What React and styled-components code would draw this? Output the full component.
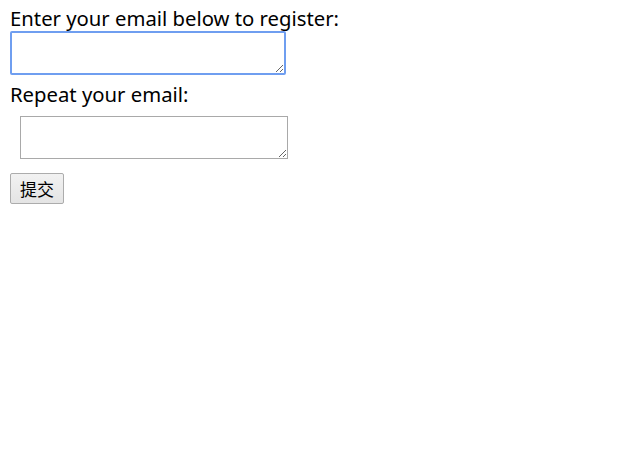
import styled, { createGlobalStyle } from "styled-components";

const GlobalStyle = createGlobalStyle`
  body {
    margin: 0;
    background: #fff;
    font-family: "Noto Sans", "Noto Sans CJK SC", sans-serif;
  }
`;

const Form = styled.form`
  display: flex;
  flex-direction: column;
  align-items: flex-start;
  padding: 6px 10px;
`;

const Label = styled.label`
  font-size: 20.3px;
  line-height: 24px;
  color: #000;
  margin-top: ${(p) => p.$gap || 0}px;
`;

const Field = styled.textarea`
  box-sizing: border-box;
  width: ${(p) => p.$width}px;
  height: ${(p) => p.$height}px;
  margin: ${(p) => p.$margin};
  border: ${(p) => (p.$focused ? "2px solid #6f9ef0" : "1px solid #a9a9a9")};
  border-radius: ${(p) => (p.$focused ? "2px" : "0")};
  padding: 2px;
  font-family: "Liberation Mono", monospace;
  font-size: 13px;
  resize: both;
  outline: none;
`;

const Submit = styled.button`
  box-sizing: border-box;
  width: 54px;
  height: 31px;
  margin-top: 14px;
  padding: 0;
  border: 1px solid #acacac;
  border-radius: 2px;
  background: linear-gradient(#f2f2f2, #e4e4e4);
  font-family: "Noto Sans CJK SC", sans-serif;
  font-size: 17px;
  color: #000;
`;

export default function App() {
  return (
    <>
      <GlobalStyle />
      <Form onSubmit={(e) => e.preventDefault()}>
        <Label htmlFor="email">Enter your email below to register:</Label>
        <Field id="email" $focused $width={276} $height={44} $margin="1px 0 0 0" />
        <Label htmlFor="email2" $gap={7}>Repeat your email:</Label>
        <Field id="email2" $width={268} $height={43} $margin="10px 0 0 10px" />
        <Submit type="submit">提交</Submit>
      </Form>
    </>
  );
}
